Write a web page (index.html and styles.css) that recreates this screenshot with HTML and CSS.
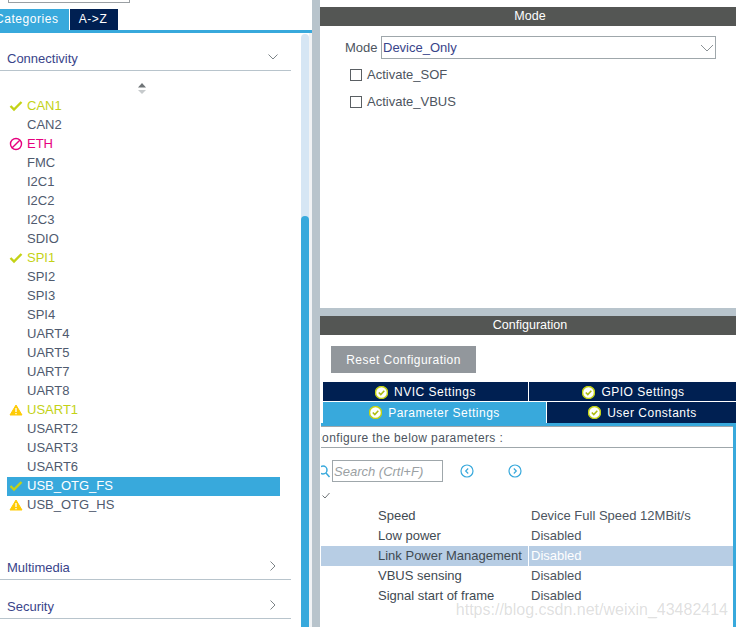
FILE: index.html
```html
<!DOCTYPE html>
<html lang="en">
<head>
  <meta charset="UTF-8">
  <meta name="viewport" content="width=device-width, initial-scale=1.0">
  <title>USB_OTG_FS Mode and Configuration</title>
  <link rel="stylesheet" href="styles.css">
</head>
<body>
  <div class="app">
    <aside class="side">
      <div class="side-main">
        <div class="search-stub"></div>
        <div class="side-tabs">
          <div class="side-tab active"><span class="side-tab-text">Categories</span></div>
          <div class="side-tab dark">A-&gt;Z</div>
        </div>
        <div class="side-body">
          <div class="side-content">
            <div class="group-head first">
              <span>Connectivity</span>
              <svg class="chev-down" width="10" height="6" viewBox="0 0 10 6"><path d="M.5 .5 5 5 9.500 .5" fill="none" stroke="#7d8488"/></svg>
            </div>
            <div class="sort">
              <svg width="10" height="12" viewBox="0 0 10 12"><path d="M5 0 9 4.500H1Z" fill="#6f7477"/><path d="M1 7H9L5 11Z" fill="#c6cacc"/></svg>
            </div>
            <ul class="ip-list">
              <li class="ok"><svg class="ico" width="14" height="12" viewBox="0 0 14 12"><path d="M1.500 6 5 9.500 12.500 2" fill="none" stroke="#c3d216" stroke-width="2.400"/></svg>CAN1</li>
              <li>CAN2</li>
              <li class="no"><svg class="ico" width="14" height="14" viewBox="0 0 14 14"><circle cx="7" cy="7" r="5.500" fill="none" stroke="#e6007e" stroke-width="1.400"/><path d="M3.200 10.800 10.800 3.200" stroke="#e6007e" stroke-width="1.400"/></svg>ETH</li>
              <li>FMC</li>
              <li>I2C1</li>
              <li>I2C2</li>
              <li>I2C3</li>
              <li>SDIO</li>
              <li class="ok"><svg class="ico" width="14" height="12" viewBox="0 0 14 12"><path d="M1.500 6 5 9.500 12.500 2" fill="none" stroke="#c3d216" stroke-width="2.400"/></svg>SPI1</li>
              <li>SPI2</li>
              <li>SPI3</li>
              <li>SPI4</li>
              <li>UART4</li>
              <li>UART5</li>
              <li>UART7</li>
              <li>UART8</li>
              <li class="ok"><svg class="ico" width="14" height="12" viewBox="0 0 14 12"><path d="M7 1 13 11H1Z" fill="#ffcb05" stroke="#ffcb05" stroke-linejoin="round"/><path d="M7 4V8M7 9V10.300" stroke="#fff" stroke-width="1.300"/></svg>USART1</li>
              <li>USART2</li>
              <li>USART3</li>
              <li>USART6</li>
              <li class="picked"><svg class="ico" width="14" height="12" viewBox="0 0 14 12"><path d="M1.500 6 5 9.500 12.500 2" fill="none" stroke="#c3d216" stroke-width="2.400"/></svg>USB_OTG_FS</li>
              <li><svg class="ico" width="14" height="12" viewBox="0 0 14 12"><path d="M7 1 13 11H1Z" fill="#ffcb05" stroke="#ffcb05" stroke-linejoin="round"/><path d="M7 4V8M7 9V10.300" stroke="#fff" stroke-width="1.300"/></svg>USB_OTG_HS</li>
            </ul>
            <div class="group-head multimedia">
              <span>Multimedia</span>
              <svg class="chev-right" width="6" height="10" viewBox="0 0 6 10"><path d="M.5 .5 5 5 .5 9.500" fill="none" stroke="#7d8488"/></svg>
            </div>
            <div class="group-head security">
              <span>Security</span>
              <svg class="chev-right" width="6" height="10" viewBox="0 0 6 10"><path d="M.5 .5 5 5 .5 9.500" fill="none" stroke="#7d8488"/></svg>
            </div>
          </div>
          <div class="scroll"><div class="scroll-thumb"></div></div>
        </div>
      </div>
    </aside>

    <main class="main">
      <section class="mode">
        <div class="panel-head">Mode</div>
        <div class="mode-row">
          <span class="mode-label">Mode</span>
          <div class="select">
            <span>Device_Only</span>
            <svg width="14" height="8" viewBox="0 0 14 8"><path d="M1 1 7 7 13 1" fill="none" stroke="#8b9296"/></svg>
          </div>
        </div>
        <label class="check"><span class="box"></span>Activate_SOF</label>
        <label class="check"><span class="box"></span>Activate_VBUS</label>
      </section>

      <section class="config">
        <div class="panel-head">Configuration</div>
        <button class="reset" type="button">Reset Configuration</button>
        <div class="tabs-row top">
          <div class="tab"><svg class="tick" width="13" height="13" viewBox="0 0 13 13"><circle cx="6.500" cy="6.500" r="6" fill="#fff" stroke="#c3d216" stroke-width="1.500"/><path d="M3.800 6.500 5.800 8.500 9.300 4.800" fill="none" stroke="#aebc12" stroke-width="1.600"/></svg>NVIC Settings</div>
          <div class="tab"><svg class="tick" width="13" height="13" viewBox="0 0 13 13"><circle cx="6.500" cy="6.500" r="6" fill="#fff" stroke="#c3d216" stroke-width="1.500"/><path d="M3.800 6.500 5.800 8.500 9.300 4.800" fill="none" stroke="#aebc12" stroke-width="1.600"/></svg>GPIO Settings</div>
        </div>
        <div class="tabs-row bottom">
          <div class="tab active"><svg class="tick" width="13" height="13" viewBox="0 0 13 13"><circle cx="6.500" cy="6.500" r="6" fill="#fff" stroke="#c3d216" stroke-width="1.500"/><path d="M3.800 6.500 5.800 8.500 9.300 4.800" fill="none" stroke="#aebc12" stroke-width="1.600"/></svg>Parameter Settings</div>
          <div class="tab"><svg class="tick" width="13" height="13" viewBox="0 0 13 13"><circle cx="6.500" cy="6.500" r="6" fill="#fff" stroke="#c3d216" stroke-width="1.500"/><path d="M3.800 6.500 5.800 8.500 9.300 4.800" fill="none" stroke="#aebc12" stroke-width="1.600"/></svg>User Constants</div>
        </div>
        <div class="param-box">
          <div class="param-title"><span>Configure the below parameters :</span></div>
          <div class="search-row">
            <svg class="lens" width="11" height="13" viewBox="0 0 11 13"><circle cx="2" cy="5" r="4" fill="none" stroke="#38a9dc" stroke-width="1.500"/><path d="M5 8 8.500 12" stroke="#38a9dc" stroke-width="1.500"/></svg>
            <div class="search-input">Search (Crtl+F)</div>
            <svg class="nav-first" width="14" height="14" viewBox="0 0 14 14"><circle cx="7" cy="7" r="6" fill="none" stroke="#38a9dc" stroke-width="1.200"/><path d="M8.200 4.500 5.700 7 8.200 9.500" fill="none" stroke="#38a9dc" stroke-width="1.200"/></svg>
            <svg class="nav-next" width="14" height="14" viewBox="0 0 14 14"><circle cx="7" cy="7" r="6" fill="none" stroke="#38a9dc" stroke-width="1.200"/><path d="M5.800 4.500 8.300 7 5.800 9.500" fill="none" stroke="#38a9dc" stroke-width="1.200"/></svg>
          </div>
          <svg class="small-tick" width="8" height="7" viewBox="0 0 8 7"><path d="M.5 3.500 3 6 7.500 1" fill="none" stroke="#6f7477"/></svg>
          <div class="param"><span class="p-name">Speed</span><span class="p-val">Device Full Speed 12MBit/s</span></div>
          <div class="param"><span class="p-name">Low power</span><span class="p-val">Disabled</span></div>
          <div class="param sel"><span class="p-name">Link Power Management</span><span class="p-val">Disabled</span></div>
          <div class="param"><span class="p-name">VBUS sensing</span><span class="p-val">Disabled</span></div>
          <div class="param"><span class="p-name">Signal start of frame</span><span class="p-val">Disabled</span></div>
        </div>
      </section>
      <div class="watermark">https://blog.csdn.net/weixin_43482414</div>
    </main>
  </div>
</body>
</html>
```

FILE: styles.css
```css
html, body { margin: 0; padding: 0; height: 100%; overflow: hidden; background: #fff; }
body { font-family: "Liberation Sans", Arial, sans-serif; font-size: 13px; color: #4d5560; }
.app { display: flex; width: 736px; height: 627px; }

/* left column */
.side { width: 320px; flex: none; box-sizing: border-box; border-right: 8px solid #b8c4cc; }
.side-main { height: 627px; display: flex; flex-direction: column; }
.search-stub { width: 122px; height: 3px; margin-left: 8px; box-sizing: border-box; border: 1px solid #9a9fa3; border-top: 0; }
.side-tabs { display: flex; margin-top: 6px; height: 21px; border-bottom: 3px solid #38a9dc; }
.side-tab { color: #fff; font-size: 12px; letter-spacing: .55px; line-height: 21px; text-align: center; overflow: hidden; }
.side-tab.active { width: 69px; background: #38a9dc; border-right: 1px solid #fff; text-align: left; }
.side-tab-text { display: block; margin-left: -5px; white-space: nowrap; }
.side-tab.dark { width: 48px; padding-right: 2px; box-sizing: border-box; background: #002052; }
.side-body { flex: 1; display: flex; min-height: 0; }
.side-content { width: 301px; flex: none; }

.group-head { display: flex; justify-content: space-between; align-items: center; width: 291px; box-sizing: border-box; padding: 0 13px 1px 7px; border-bottom: 1px solid #b8c4cc; color: #39448a; height: 24px; }
.group-head.first { margin-top: 14px; }
.group-head.multimedia { margin-top: 41px; }
.group-head.security { margin-top: 15px; }
.chev-down { flex: none; margin-top: -3px; }
.chev-right { flex: none; margin: -2px 2px 0 0; }
.sort { height: 26px; padding-left: 137px; box-sizing: border-box; padding-top: 12px; }

.ip-list { list-style: none; margin: 0; padding: 0; }
.ip-list li { display: flex; align-items: center; height: 19px; width: 273px; margin-left: 7px; padding: 0 0 2px 20px; box-sizing: border-box; color: #4f5a6e; white-space: nowrap; }
.ico { margin-left: -18px; margin-right: 4px; flex: none; }
.ip-list .ok { color: #c3d216; }
.ip-list .no { color: #e6007e; }
.ip-list .picked { background: #38a9dc; color: #fff; }

.scroll { width: 8px; flex: none; background: #d6e6f4; border-radius: 4px 4px 0 0; margin-top: 1px; display: flex; flex-direction: column; justify-content: flex-end; }
.scroll-thumb { height: 411px; background: #38a9dc; border-radius: 4px 4px 0 0; }
.side-body::after { content: ""; width: 3px; flex: none; background: #f1f3f5; }

/* right column */
.main { flex: 1; position: relative; display: flex; flex-direction: column; min-width: 0; }
.panel-head { background: #545654; color: #fff; font-size: 12.500px; height: 19px; line-height: 19px; padding-left: 4px; text-align: center; }
.mode { height: 308px; padding-top: 7px; box-sizing: border-box; }
.mode-row { display: flex; align-items: center; margin: 10px 20px 0 25px; }
.mode-label { width: 36px; flex: none; }
.select { flex: 1; height: 23px; box-sizing: border-box; border: 1px solid #9fa7ab; display: flex; align-items: center; justify-content: space-between; padding: 0 1px 0 1px; color: #39448a; }
.check { display: flex; align-items: center; margin: 0 0 0 30px; height: 13px; }
.mode-row + .check { margin-top: 9px; }
.check + .check { margin-top: 14px; }
.box { width: 12px; height: 12px; box-sizing: border-box; border: 1px solid #5a5f63; margin-right: 5px; flex: none; }

.config { flex: 1; border-top: 8px solid #b8c4cc; min-height: 0; }
.reset { display: block; margin: 11px 0 9px 11px; width: 145px; height: 27px; background: #92979c; color: #fff; border: 0; padding: 0; font: 12px "Liberation Sans", Arial, sans-serif; letter-spacing: .45px; }
.tabs-row { display: flex; margin-left: 3px; color: #fff; font-size: 12px; letter-spacing: .5px; }
.tab { display: flex; align-items: center; justify-content: center; background: #002052; box-sizing: border-box; border-right: 1px solid #fff; }
.tab:last-child { border-right: 0; flex: 1; padding-left: 2px; }
.tabs-row.top { height: 19px; border-bottom: 1px solid #fff; }
.tabs-row.top .tab { padding-top: 1px; }
.tabs-row.top .tab:first-child { width: 206px; }
.tabs-row.bottom { height: 21px; }
.tabs-row.bottom .tab:first-child { width: 224px; }
.tab.active { background: #38a9dc; }
.tick { margin-right: 6px; flex: none; }

.param-box { margin-left: 1px; height: 204px; border-top: 3px solid #38a9dc; border-right: 3px solid #38a9dc; overflow: hidden; }
.param-title { border-top: 1px solid #9fa7ab; border-bottom: 1px solid #9fa7ab; height: 20px; line-height: 22px; font-size: 12px; letter-spacing: .4px; overflow: hidden; white-space: nowrap; }
.param-title span { display: block; margin-left: -8px; }
.search-row { display: flex; align-items: center; height: 22px; margin-top: 12px; }
.lens { flex: none; }
.search-input { width: 111px; height: 22px; line-height: 21px; box-sizing: border-box; border: 1px solid #9fa7ab; padding-left: 1px; color: #9a9fa3; font-style: italic; white-space: nowrap; overflow: hidden; }
.nav-first { margin-left: 17px; }
.nav-next { margin-left: 34px; }
.small-tick { display: block; margin: 10px 0 7px 1px; }
.param { display: flex; height: 20px; align-items: center; box-sizing: border-box; padding-bottom: 2px; }
.p-name { width: 207px; padding-left: 57px; box-sizing: border-box; flex: none; color: #3f4a52; white-space: nowrap; }
.p-val { flex: 1; padding-left: 3px; white-space: nowrap; }
.param.sel { background: linear-gradient(#fff, #fff) 207px 0 / 1px 100% no-repeat, #b7cde4; }
.param.sel .p-val { color: #fff; }
.watermark { position: absolute; right: 8px; top: 601px; font-size: 16px; color: rgba(120,120,120,.24); white-space: nowrap; pointer-events: none; }
```
